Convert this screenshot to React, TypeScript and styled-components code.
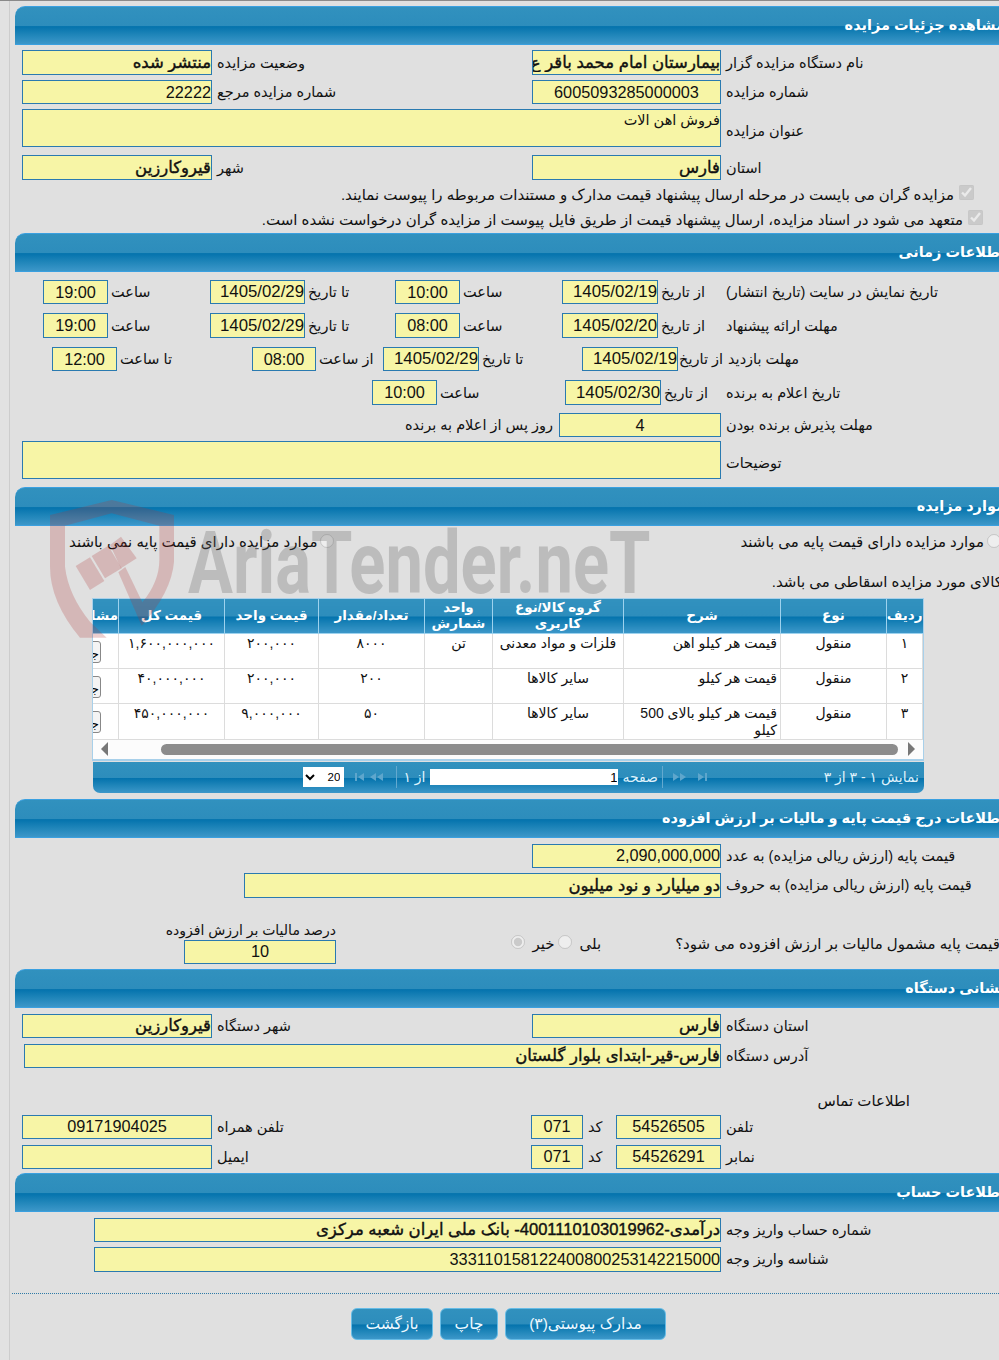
import React from "react";
import styled, { createGlobalStyle } from "styled-components";

const GlobalStyle = createGlobalStyle`
  html, body {
    margin: 0;
    padding: 0;
    background: #e0e0e0;
    overflow: hidden;
  }
  body, input, textarea, select, button, table {
    font-family: "Liberation Sans", "DejaVu Sans", sans-serif;
  }
`;

const headBg = `linear-gradient(#3191be 0, #2d8dbc 50%, #0473ad 53%, #1f85b9 75%, #3c97c9 100%)`;

const Page = styled.div`
  position: relative;
  width: 999px;
  height: 1360px;
  overflow: hidden;
  box-sizing: border-box;
  border-top: 1px solid #8a8a8a;
  padding-left: 9px;
  background: #e2e2e2;
`;

const Inner = styled.div`
  width: 996px;
  height: 100%;
  box-sizing: border-box;
  border-left: 1px solid #cdcdcd;
  padding: 5px 0 0 5px;
  background: #e0e0e0;
  color: #111;
  font-size: 15px;
`;

const Section = styled.section`
  width: 990px;
  direction: rtl;
`;

const Head = styled.h2<{ $mt?: number }>`
  margin: ${(p) => p.$mt ?? 0}px 0 0;
  height: 37px;
  border-top: 1px solid #3aa0e0;
  border-bottom: 1px solid #3aa0e0;
  border-top-left-radius: 10px;
  background: ${headBg};
  color: #fff;
  font-size: 14.5px;
  font-weight: bold;
  line-height: 36px;
  white-space: nowrap;
`;

const Row = styled.div<{ $mt: number; $h?: number }>`
  display: flex;
  align-items: center;
  margin-top: ${(p) => p.$mt}px;
  height: ${(p) => p.$h ?? 24}px;
`;

const Label = styled.label<{ $w: number }>`
  flex: 0 0 ${(p) => p.$w}px;
  width: ${(p) => p.$w}px;
  box-sizing: border-box;
  padding-left: 3px;
  font-size: 14.5px;
  text-align: left;
  white-space: nowrap;
`;

const MainLabel = styled(Label)`
  padding-left: 5px;
`;

const AreaLabel = styled(MainLabel)`
  padding-top: 5px;
`;

const Field = styled.input<{ $w: number; $center?: boolean; $strong?: boolean; $h?: number }>`
  flex: 0 0 ${(p) => p.$w}px;
  width: ${(p) => p.$w}px;
  height: ${(p) => p.$h ?? 24}px;
  box-sizing: border-box;
  margin: 0;
  padding: 0;
  border: 1px solid #2a7ab0;
  border-radius: 0;
  outline: none;
  background: #f7f5a6;
  color: #111;
  direction: rtl;
  font-size: ${(p) => (p.$strong ? 16.5 : 16.3)}px;
  -webkit-text-stroke: ${(p) => (p.$strong ? "0.4px #111" : "0")};
  text-align: ${(p) => (p.$center ? "center" : "right")};
`;

const DateField = styled(Field)`
  font-size: 16.8px;
`;

const TaxField = styled(Field)`
  flex: none;
`;

const Area = styled.textarea<{ $w: number; $h: number }>`
  flex: 0 0 ${(p) => p.$w}px;
  width: ${(p) => p.$w}px;
  height: ${(p) => p.$h}px;
  box-sizing: border-box;
  margin: 0;
  padding: 2px 0 0;
  border: 1px solid #2a7ab0;
  outline: none;
  resize: none;
  overflow: hidden;
  background: #f7f5a6;
  color: #111;
  font-size: 14.5px;
`;

const Gap = styled.span<{ $w: number }>`
  flex: 0 0 ${(p) => p.$w}px;
`;

const CheckRow = styled.div<{ $mt: number; $pr: number }>`
  display: flex;
  align-items: center;
  height: 20px;
  margin-top: ${(p) => p.$mt}px;
  padding-right: ${(p) => p.$pr}px;
  white-space: nowrap;
`;

const Check = styled.input`
  margin: 0 0 6px 5px;
  width: 15px;
  height: 15px;
`;

const Radio = styled.input<{ $mr?: number; $ml?: number }>`
  flex: none;
  margin: 0 ${(p) => p.$mr ?? 0}px 3px ${(p) => p.$ml ?? 3}px;
  width: 14px;
  height: 14px;
`;

const Plain = styled.span`
  white-space: nowrap;
`;

const RadioRow = styled.div`
  display: flex;
  align-items: center;
  height: 20px;
  margin-top: 6px;
  padding-right: 4px;
`;

const Note = styled.div`
  margin: 21px 0 5px;
  height: 20px;
  padding-right: 3px;
  white-space: nowrap;
`;

const Grid = styled.div`
  width: 832px;
  margin-right: 81px;
`;

const TableBox = styled.div`
  border: 1px solid #a8d0ea;
  border-bottom-width: 2px;
  background: #fcfcfc;
  overflow: hidden;
`;

const Table = styled.table`
  width: 831px;
  table-layout: fixed;
  border-collapse: collapse;
  font-size: 14px;
`;

const Th = styled.th<{ $w: number }>`
  width: ${(p) => p.$w}px;
  height: 34px;
  box-sizing: border-box;
  padding: 0;
  overflow: hidden;
  border-left: 1px solid #9dd2ee;
  border-bottom: 1px solid #9dd2ee;
  background: ${headBg};
  color: #fff;
  font-size: 13.5px;
  font-weight: bold;
  line-height: 16px;
  white-space: normal;
`;

const Td = styled.td<{ $start?: boolean }>`
  height: 35px;
  padding: 1px 3px 0;
  overflow: hidden;
  box-sizing: border-box;
  border: 1px solid #dcdcdc;
  border-top: 0;
  background: #fff;
  line-height: 17px;
  text-align: ${(p) => (p.$start ? "right" : "center")};
  vertical-align: top;
`;

const EdgeTd = styled(Td)`
  padding: 7px 17px 0 0;
  text-align: right;
  white-space: nowrap;
`;

const RowButton = styled.button`
  display: block;
  width: 50px;
  height: 22px;
  padding: 4px 1px 0 0;
  border: 1px solid #888;
  border-radius: 3px;
  background: #f4f4f4;
  font-size: 13px;
  line-height: 12px;
  text-align: right;
`;

const ScrollTrack = styled.div`
  display: flex;
  align-items: center;
  height: 19px;
  padding: 0 7px 0 7px;
  direction: ltr;
`;

const ScrollThumb = styled.div`
  width: 737px;
  height: 11px;
  margin: 0 9px 0 auto;
  border-radius: 6px;
  background: #8c8c8c;
`;

const Pager = styled.div`
  display: flex;
  align-items: center;
  height: 31px;
  margin: 1px 0 0 1px;
  padding-right: 5px;
  border-bottom-left-radius: 7px;
  border-bottom-right-radius: 7px;
  background: ${headBg};
  color: #dff1fb;
  font-size: 14px;
  white-space: nowrap;
`;

const PagerInfo = styled.span`
  flex: 0 0 97px;
`;

const PagerSep = styled.span<{ $mr: number; $ml: number }>`
  flex: none;
  width: 1px;
  height: 22px;
  margin: 0 ${(p) => p.$mr}px 0 ${(p) => p.$ml}px;
  background: #63a9cf;
`;

const PagerInput = styled.input`
  flex: none;
  width: 188px;
  height: 16px;
  box-sizing: border-box;
  margin: 0 4px 0 5px;
  padding: 0 1px;
  border: 0;
  background: #fff;
  font-size: 13px;
  text-align: right;
`;

const PagerSelect = styled.select`
  flex: none;
  width: 41px;
  height: 20px;
  margin-right: 8px;
  border: 0;
  border-radius: 0;
  background: #fff;
  font-size: 11.5px;
`;

const Stack = styled.div`
  display: flex;
  flex-direction: column;
  align-items: flex-start;
  flex: 0 0 168px;
`;

const TaxCaption = styled.div`
  height: 18px;
  font-size: 14px;
  white-space: nowrap;
`;

const TaxRow = styled.div`
  display: flex;
  align-items: flex-start;
  height: 47px;
  margin-top: 24px;
`;

const Choice = styled.div`
  display: flex;
  flex: 0 0 669px;
  align-items: center;
  height: 24px;
  margin-top: 10px;
`;

const Rule = styled.hr`
  width: 993px;
  margin: 21px 0 0;
  border: 0;
  border-top: 1px dotted #2f7aa6;
`;

const Actions = styled.div`
  display: flex;
  gap: 7px;
  margin: 14px 339px 0 0;
`;

const ActionButton = styled.button<{ $w: number }>`
  width: ${(p) => p.$w}px;
  height: 32px;
  padding: 0;
  border: 1px solid #67bce6;
  border-radius: 6px;
  background: ${headBg};
  color: #eef9ff;
  font-size: 15.5px;
`;

const Mark = styled.div`
  position: absolute;
  left: 40px;
  top: 494px;
  width: 620px;
  height: 150px;
  pointer-events: none;
`;

const MarkShield = styled.svg`
  position: absolute;
  left: 0;
  top: 0;
`;

const MarkText = styled.span`
  position: absolute;
  left: 148px;
  top: 18px;
  color: rgba(105, 105, 105, 0.3);
  font-family: "Roboto", "Liberation Sans", sans-serif;
  font-size: 88px;
  font-weight: 700;
  line-height: 100px;
  white-space: nowrap;
  transform: scale(0.76, 1);
  transform-origin: left top;
`;

const Arrow = ({ dir }: { dir: "left" | "right" }) => (
  <svg width="9" height="14" viewBox="0 0 9 14">
    <path d={dir === "left" ? "M8 0v14L1 7z" : "M1 0v14l7-7z"} fill="#777" />
  </svg>
);

const PageArrows = ({ end }: { end: boolean }) => (
  <svg width="38" height="10" viewBox="0 0 38 10" style={{ flex: "none" }}>
    <g fill="#5ea6cc">
      {end ? (
        <path d="M1 1l6 4-6 4zM8 1l6 4-6 4zM26 1l6 4-6 4zM33 1h2v8h-2z" />
      ) : (
        <path d="M3 1h2v8H3zM12 1L6 5l6 4zM24 1l-6 4 6 4zM31 1l-6 4 6 4z" />
      )}
    </g>
  </svg>
);

const Shield = () => (
  <MarkShield width="150" height="150" viewBox="0 0 450 450">
    <g fill="rgba(175,55,55,0.24)">
      <path d="M30 60L215 15 402 60V200Q395 290 305 392L235 232 256 216 307 322Q358 260 358 195V92L215 55 75 92V215Q85 300 150 380L200 428H120Q30 320 30 215Z" />
      <path d="M107 213L150 187 193 258 150 285Z" />
      <path d="M155 183L205 152 245 220 195 250Z" />
      <path d="M210 150L243 125 290 190 243 220Z" />
    </g>
  </MarkShield>
);

const items = [
  ["۱", "منقول", "قیمت هر کیلو اهن", "فلزات و مواد معدنی", "تن", "۸۰۰۰", "۲۰۰,۰۰۰", "۱,۶۰۰,۰۰۰,۰۰۰"],
  ["۲", "منقول", "قیمت هر کیلو", "سایر کالاها", "", "۲۰۰", "۲۰۰,۰۰۰", "۴۰,۰۰۰,۰۰۰"],
  ["۳", "منقول", "قیمت هر کیلو بالای 500 کیلو", "سایر کالاها", "", "۵۰", "۹,۰۰۰,۰۰۰", "۴۵۰,۰۰۰,۰۰۰"],
];

const columns: [string, number][] = [
  ["ردیف", 36],
  ["نوع", 106],
  ["شرح", 157],
  ["گروه کالا/نوع کاربری", 131],
  ["واحد شمارش", 68],
  ["تعداد/مقدار", 106],
  ["قیمت واحد", 94],
  ["قیمت کل", 106],
  ["مشاهده", 27],
];

const App = () => (
  <Page>
    <GlobalStyle />
    <Inner>
      <Section>
        <Head>مشاهده جزئیات مزایده</Head>
        <Row $mt={5} $h={25}>
          <MainLabel $w={284}>نام دستگاه مزایده گزار</MainLabel>
          <Field $w={189} $h={25} $strong readOnly value="بیمارستان امام محمد باقر ع" />
          <MainLabel $w={320}>وضعیت مزایده</MainLabel>
          <Field $w={190} $h={25} $strong readOnly value="منتشر شده" />
        </Row>
        <Row $mt={5}>
          <MainLabel $w={284}>شماره مزایده</MainLabel>
          <Field $w={189} $center readOnly value="6005093285000003" />
          <MainLabel $w={320}>شماره مزایده مرجع</MainLabel>
          <Field $w={190} readOnly value="22222" />
        </Row>
        <Row $mt={5} $h={38}>
          <AreaLabel $w={284}>عنوان مزایده</AreaLabel>
          <Area $w={699} $h={38} readOnly value="فروش اهن الات" />
        </Row>
        <Row $mt={8} $h={25}>
          <MainLabel $w={284}>استان</MainLabel>
          <Field $w={189} $h={25} $strong readOnly value="فارس" />
          <MainLabel $w={320}>شهر</MainLabel>
          <Field $w={190} $h={25} $strong readOnly value="قیروکارزین" />
        </Row>
        <CheckRow $mt={5} $pr={31}>
          <Check type="checkbox" disabled defaultChecked />
          <Plain>مزایده گران می بایست در مرحله ارسال پیشنهاد قیمت مدارک و مستندات مربوطه را پیوست نمایند.</Plain>
        </CheckRow>
        <CheckRow $mt={5} $pr={22}>
          <Check type="checkbox" disabled defaultChecked />
          <Plain>متعهد می شود در اسناد مزایده، ارسال پیشنهاد قیمت از طریق فایل پیوست از مزایده گران درخواست نشده است.</Plain>
        </CheckRow>
      </Section>

      <Section>
        <Head $mt={3}>اطلاعات زمانی</Head>
        <Row $mt={8}>
          <MainLabel $w={284}>تاریخ نمایش در سایت (تاریخ انتشار)</MainLabel>
          <Label $w={63}>از تاریخ</Label>
          <DateField $w={96} readOnly value="1405/02/19" />
          <Label $w={102}>ساعت</Label>
          <Field $w={65} $center readOnly value="10:00" />
          <Label $w={90}>تا تاریخ</Label>
          <DateField $w={95} readOnly value="1405/02/29" />
          <Label $w={102}>ساعت</Label>
          <Field $w={65} $center readOnly value="19:00" />
        </Row>
        <Row $mt={9} $h={25}>
          <MainLabel $w={284}>مهلت ارائه پیشنهاد</MainLabel>
          <Label $w={63}>از تاریخ</Label>
          <DateField $w={96} $h={25} readOnly value="1405/02/20" />
          <Label $w={102}>ساعت</Label>
          <Field $w={65} $h={25} $center readOnly value="08:00" />
          <Label $w={90}>تا تاریخ</Label>
          <DateField $w={95} $h={25} readOnly value="1405/02/29" />
          <Label $w={102}>ساعت</Label>
          <Field $w={65} $h={25} $center readOnly value="19:00" />
        </Row>
        <Row $mt={9}>
          <MainLabel $w={282}>مهلت بازدید</MainLabel>
          <Label $w={45}>از تاریخ</Label>
          <DateField $w={96} readOnly value="1405/02/19" />
          <Label $w={103}>تا تاریخ</Label>
          <DateField $w={96} readOnly value="1405/02/29" />
          <Label $w={67}>از ساعت</Label>
          <Field $w={64} $center readOnly value="08:00" />
          <Label $w={135}>تا ساعت</Label>
          <Field $w={65} $center readOnly value="12:00" />
        </Row>
        <Row $mt={9} $h={25}>
          <MainLabel $w={284}>تاریخ اعلام به برنده</MainLabel>
          <Label $w={60}>از تاریخ</Label>
          <DateField $w={96} $h={25} readOnly value="1405/02/30" />
          <Label $w={128}>ساعت</Label>
          <Field $w={65} $h={25} $center readOnly value="10:00" />
        </Row>
        <Row $mt={8}>
          <MainLabel $w={284}>مهلت پذیرش برنده بودن</MainLabel>
          <Field $w={162} $center readOnly value="4" />
          <Label $w={157}>روز پس از اعلام به برنده</Label>
        </Row>
        <Row $mt={4} $h={38}>
          <AreaLabel $w={284}>توضیحات</AreaLabel>
          <Area $w={699} $h={38} readOnly value="" />
        </Row>
      </Section>

      <Section>
        <Head $mt={8}>موارد مزایده</Head>
        <RadioRow>
          <Radio type="radio" disabled name="base" />
          <Plain>موارد مزایده دارای قیمت پایه می باشند</Plain>
          <Gap $w={406} />
          <Radio type="radio" disabled name="base" />
          <Plain>موارد مزایده دارای قیمت پایه نمی باشند</Plain>
        </RadioRow>
        <Note>کالای مورد مزایده اسقاطی می باشد.</Note>
        <Grid>
          <TableBox>
            <Table>
              <thead>
                <tr>
                  {columns.map(([title, w]) => (
                    <Th key={title} $w={w}>
                      {title}
                    </Th>
                  ))}
                </tr>
              </thead>
              <tbody>
                {items.map((row) => (
                  <tr key={row[0]}>
                    {row.map((cell, i) => (
                      <Td key={i} $start={i === 2}>
                        {cell}
                      </Td>
                    ))}
                    <EdgeTd>
                      <RowButton>جزئیات</RowButton>
                    </EdgeTd>
                  </tr>
                ))}
              </tbody>
            </Table>
            <ScrollTrack>
              <Arrow dir="left" />
              <ScrollThumb />
              <Arrow dir="right" />
            </ScrollTrack>
          </TableBox>
          <Pager>
            <PagerInfo>نمایش ۱ - ۳ از ۳</PagerInfo>
            <Gap $w={112} />
            <PageArrows end />
            <PagerSep $mr={9} $ml={4} />
            <span>صفحه</span>
            <PagerInput readOnly value="1" />
            <span>از ۱</span>
            <PagerSep $mr={6} $ml={6} />
            <PageArrows end={false} />
            <PagerSelect defaultValue="20">
              <option value="20">20</option>
            </PagerSelect>
          </Pager>
        </Grid>
      </Section>

      <Section>
        <Head $mt={6}>اطلاعات درج قیمت پایه و مالیات بر ارزش افزوده</Head>
        <Row $mt={6}>
          <MainLabel $w={284}>قیمت پایه (ارزش ریالی مزایده) به عدد</MainLabel>
          <Field $w={189} readOnly value="2,090,000,000" />
        </Row>
        <Row $mt={5} $h={25}>
          <MainLabel $w={284}>قیمت پایه (ارزش ریالی مزایده) به حروف</MainLabel>
          <Field $w={477} $h={25} $strong readOnly value="دو میلیارد و نود میلیون" />
        </Row>
        <TaxRow>
          <Choice>
            <Gap $w={5} />
            <Plain>قیمت پایه مشمول مالیات بر ارزش افزوده می شود؟</Plain>
            <Gap $w={74} />
            <Plain>بلی</Plain>
            <Radio type="radio" disabled name="tax" $mr={8} $ml={3} />
            <Plain>خیر</Plain>
            <Radio type="radio" disabled defaultChecked name="tax" $mr={7} $ml={0} />
          </Choice>
          <Stack>
            <TaxCaption>درصد مالیات بر ارزش افزوده</TaxCaption>
            <TaxField $w={152} $center readOnly value="10" />
          </Stack>
        </TaxRow>
      </Section>

      <Section>
        <Head>نشانی دستگاه</Head>
        <Row $mt={6}>
          <MainLabel $w={284}>استان دستگاه</MainLabel>
          <Field $w={189} $strong readOnly value="فارس" />
          <MainLabel $w={320}>شهر دستگاه</MainLabel>
          <Field $w={190} $strong readOnly value="قیروکارزین" />
        </Row>
        <Row $mt={6}>
          <MainLabel $w={284}>آدرس دستگاه</MainLabel>
          <Field $w={697} $strong readOnly value="فارس-قیر-ابتدای بلوار گلستان" />
        </Row>
        <Row $mt={23} $h={20}>
          <Gap $w={95} />
          <Plain>اطلاعات تماس</Plain>
        </Row>
        <Row $mt={4}>
          <MainLabel $w={284}>تلفن</MainLabel>
          <Field $w={105} $center readOnly value="54526505" />
          <MainLabel $w={33}>کد</MainLabel>
          <Field $w={52} $center readOnly value="071" />
          <MainLabel $w={319}>تلفن همراه</MainLabel>
          <Field $w={190} $center readOnly value="09171904025" />
        </Row>
        <Row $mt={6}>
          <MainLabel $w={284}>نمابر</MainLabel>
          <Field $w={105} $center readOnly value="54526291" />
          <MainLabel $w={33}>کد</MainLabel>
          <Field $w={52} $center readOnly value="071" />
          <MainLabel $w={319}>ایمیل</MainLabel>
          <Field $w={190} readOnly value="" />
        </Row>
      </Section>

      <Section>
        <Head $mt={4}>اطلاعات حساب</Head>
        <Row $mt={6}>
          <MainLabel $w={284}>شماره حساب واریز وجه</MainLabel>
          <Field $w={627} $strong readOnly value="درآمدی-4001110103019962- بانک ملی ایران شعبه مرکزی" />
        </Row>
        <Row $mt={5} $h={25}>
          <MainLabel $w={284}>شناسه واریز وجه</MainLabel>
          <Field $w={627} $h={25} readOnly value="333110158122400800253142215000" />
        </Row>
        <Rule />
        <Actions>
          <ActionButton $w={161}>مدارک پیوستی(۳)</ActionButton>
          <ActionButton $w={58}>چاپ</ActionButton>
          <ActionButton $w={82}>بازگشت</ActionButton>
        </Actions>
      </Section>
    </Inner>
    <Mark>
      <Shield />
      <MarkText>AriaTender.neT</MarkText>
    </Mark>
  </Page>
);

export default App;
